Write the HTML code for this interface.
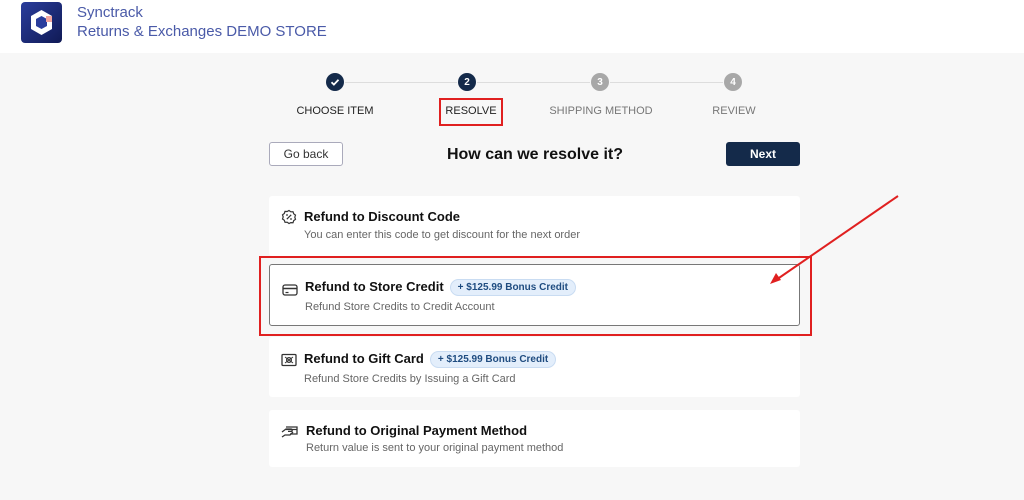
<!DOCTYPE html>
<html><head><meta charset="utf-8"><style>
*{box-sizing:border-box;margin:0;padding:0}
body{width:1024px;height:500px;background:#f7f7f7;font-family:"Liberation Sans",sans-serif;position:relative;overflow:hidden}
.hdr{position:absolute;left:0;top:0;width:1024px;height:53px;background:#fff}
.logo{position:absolute;left:21px;top:2px;width:41px;height:41px;border-radius:4px;background:linear-gradient(135deg,#2a3d9c,#101a55)}
.ht{position:absolute;left:77px;color:#4a5aa8;font-size:15px}
.circ{position:absolute;top:73px;width:18px;height:18px;border-radius:50%;color:#fff;font-size:10px;font-weight:bold;display:flex;align-items:center;justify-content:center}
.line{position:absolute;top:82px;height:1px;background:#ddd}
.lbl{position:absolute;top:105px;font-size:11px;text-align:center;width:140px}
.btn{position:absolute;top:142px;height:24px;width:74px;border-radius:3px;font-size:12px;text-align:center;line-height:22px}
.card{position:absolute;left:269px;width:531px;background:#fff;border-radius:3px}
.t{position:absolute;left:35px;font-size:13px;font-weight:bold;color:#111}
.s{position:absolute;left:35px;font-size:11px;color:#666}
.badge{display:inline-block;margin-left:6px;background:#e3eefb;border:1px solid #c9dcf2;color:#1f4c80;font-size:10px;border-radius:9px;padding:2px 7px;font-weight:bold;vertical-align:1px}
.ic{position:absolute;left:12px}
</style></head><body>
<div class="hdr">
<div class="logo"><svg width="41" height="41" viewBox="0 0 41 41"><polygon points="20.5,8 31,14 31,27 20.5,33 10,27 10,14" fill="#fff"/><polygon points="20.5,14 26,17 26,24 20.5,27 15,24 15,17" fill="#2a3d9c"/><rect x="25" y="14" width="6" height="6" fill="#f2a6a0"/></svg></div>
<div class="ht" style="top:4px">Synctrack</div>
<div class="ht" style="top:23px">Returns &amp; Exchanges DEMO STORE</div>
</div>
<div class="line" style="left:345px;width:112px"></div>
<div class="line" style="left:477px;width:113px"></div>
<div class="line" style="left:610px;width:113px"></div>
<div class="circ" style="left:326px;background:#142a4a"><svg width="18" height="18"><path d="M5.5 9.2l2.4 2.4 4.6-4.8" stroke="#fff" stroke-width="1.8" fill="none"/></svg></div>
<div class="circ" style="left:458px;background:#142a4a">2</div>
<div class="circ" style="left:591px;background:#a8a8a8">3</div>
<div class="circ" style="left:724px;background:#a8a8a8">4</div>
<div class="lbl" style="left:265px;color:#222">CHOOSE ITEM</div>
<div class="lbl" style="left:401px;color:#222">RESOLVE</div>
<div class="lbl" style="left:531px;color:#777">SHIPPING METHOD</div>
<div class="lbl" style="left:664px;color:#777">REVIEW</div>
<div style="position:absolute;left:439px;top:98px;width:64px;height:28px;border:2px solid #e02020"></div>
<div class="btn" style="left:269px;border:1px solid #aab;background:#fff;color:#333">Go back</div>
<div style="position:absolute;left:400px;width:270px;text-align:center;top:146px;font-size:16px;font-weight:bold;color:#111">How can we resolve it?</div>
<div class="btn" style="left:726px;background:#142a4a;color:#fff;font-weight:bold;line-height:24px">Next</div>

<div class="card" style="top:196px;height:60px">
<svg class="ic" style="top:13px" width="16" height="16" viewBox="0 0 16 16"><path d="M8 1.5l1.8 1.3 2.2-.1.7 2.1 1.8 1.3-.7 2.1.7 2.1-1.8 1.3-.7 2.1-2.2-.1L8 14.5l-1.8-1.3-2.2.1-.7-2.1L1.5 10l.7-2.1-.7-2.1 1.8-1.3.7-2.1 2.2.1z" fill="none" stroke="#333" stroke-width="1.2"/><path d="M5.8 10.2l4.4-4.4" stroke="#333" stroke-width="1.2"/><circle cx="6" cy="6" r=".9" fill="#333"/><circle cx="10" cy="10" r=".9" fill="#333"/></svg>
<div class="t" style="top:13px">Refund to Discount Code</div>
<div class="s" style="top:33px">You can enter this code to get discount for the next order</div>
</div>
<div class="card" style="top:264px;height:62px;border:1px solid #777">
<svg class="ic" style="top:18px" width="16" height="14" viewBox="0 0 16 14"><rect x="1" y="2" width="14" height="10" rx="2" fill="none" stroke="#333" stroke-width="1.3"/><path d="M1 5.5h14" stroke="#333" stroke-width="1.5"/><path d="M3.5 9.5h3" stroke="#333" stroke-width="1.2"/></svg>
<div class="t" style="top:14px">Refund to Store Credit<span class="badge">+ $125.99 Bonus Credit</span></div>
<div class="s" style="top:36px">Refund Store Credits to Credit Account</div>
</div>
<div style="position:absolute;left:259px;top:256px;width:553px;height:80px;border:2px solid #e02020"></div>
<div class="card" style="top:337px;height:60px">
<svg class="ic" style="top:16px" width="16" height="14" viewBox="0 0 16 14"><rect x="1" y="1.5" width="14" height="11" rx="1" fill="none" stroke="#333" stroke-width="1.3"/><circle cx="8" cy="7" r="2.4" fill="none" stroke="#333" stroke-width="1.2"/><path d="M4 4l8 6M12 4l-8 6" stroke="#333" stroke-width="1"/></svg>
<div class="t" style="top:14px">Refund to Gift Card<span class="badge">+ $125.99 Bonus Credit</span></div>
<div class="s" style="top:36px">Refund Store Credits by Issuing a Gift Card</div>
</div>
<div class="card" style="top:410px;height:57px">
<svg class="ic" style="top:14px" width="18" height="16" viewBox="0 0 18 16"><path d="M5 3h11v7H9M1 8l4-3h5a1.2 1.2 0 010 2.4H7M1 13l3-2h5l3-3" fill="none" stroke="#333" stroke-width="1.3"/><path d="M5 5.5h11" stroke="#333" stroke-width="1.2"/></svg>
<div class="t" style="top:13px;left:37px">Refund to Original Payment Method</div>
<div class="s" style="top:32px;left:37px">Return value is sent to your original payment method</div>
</div>
<svg style="position:absolute;left:0;top:0" width="1024" height="500"><path d="M898 196L776 280" stroke="#e02020" stroke-width="2"/><path d="M770 284l6-11 5 7z" fill="#e02020"/></svg>
</body></html>
